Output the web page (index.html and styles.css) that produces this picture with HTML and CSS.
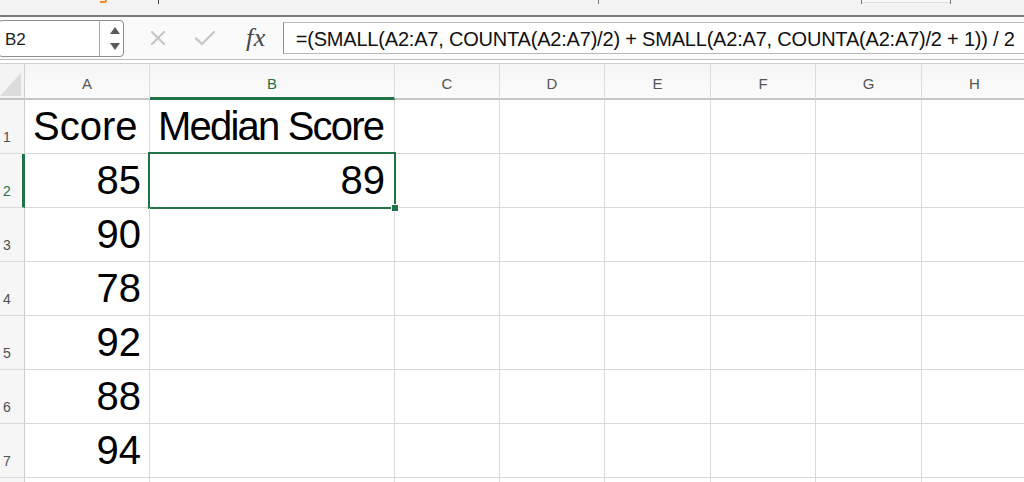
FILE: index.html
```html
<!DOCTYPE html>
<html>
<head>
<meta charset="utf-8">
<link rel="stylesheet" href="styles.css">
</head>
<body>
<div class="app">
  <div class="ribbon-edge">
    <span class="mark-orange"></span>
    <span class="tick tick-1"></span>
    <span class="tick tick-2"></span>
    <span class="tick tick-3"></span>
    <span class="ribbon-box"></span>
    <span class="tick"></span>
  </div>
  <div class="formula-bar">
    <div class="name-box">
      <span class="name-text">B2</span>
      <span class="name-spin"><i class="tri tri-up"></i><i class="tri tri-down"></i></span>
    </div>
    <svg class="ico-x" width="16" height="16" viewBox="0 0 16 16"><path d="M2 2 L14 14 M14 2 L2 14" stroke="#c6c6c6" stroke-width="2.2" fill="none" stroke-linecap="round"/></svg>
    <svg class="ico-check" width="22" height="16" viewBox="0 0 22 16"><path d="M2 8.5 L8 14 L20 2" stroke="#cacaca" stroke-width="2.4" fill="none" stroke-linecap="round" stroke-linejoin="round"/></svg>
    <span class="fx">fx</span>
    <div class="formula-input">=(SMALL(A2:A7, COUNTA(A2:A7)/2) + SMALL(A2:A7, COUNTA(A2:A7)/2 + 1)) / 2</div>
  </div>
  <div class="bar-sep"></div>
  <div class="sheet">
    <div class="corner"><svg class="corner-tri" width="21" height="23" viewBox="0 0 21 23"><path d="M21 0 L21 23 L0 23 Z" fill="#dcdcdc"/></svg></div>
    <div class="col-head">A</div>
    <div class="col-head col-sel">B</div>
    <div class="col-head">C</div>
    <div class="col-head">D</div>
    <div class="col-head">E</div>
    <div class="col-head">F</div>
    <div class="col-head">G</div>
    <div class="col-head">H</div>

    <div class="row-head">1</div>
    <div class="cell">Score</div>
    <div class="cell cell-title">Median Score</div>
    <div class="cell"></div><div class="cell"></div><div class="cell"></div><div class="cell"></div><div class="cell"></div><div class="cell"></div>

    <div class="row-head row-sel">2</div>
    <div class="cell num">85</div>
    <div class="cell num active">89<span class="fill-handle"></span></div>
    <div class="cell"></div><div class="cell"></div><div class="cell"></div><div class="cell"></div><div class="cell"></div><div class="cell"></div>

    <div class="row-head">3</div>
    <div class="cell num">90</div>
    <div class="cell"></div>
    <div class="cell"></div><div class="cell"></div><div class="cell"></div><div class="cell"></div><div class="cell"></div><div class="cell"></div>

    <div class="row-head">4</div>
    <div class="cell num">78</div>
    <div class="cell"></div>
    <div class="cell"></div><div class="cell"></div><div class="cell"></div><div class="cell"></div><div class="cell"></div><div class="cell"></div>

    <div class="row-head">5</div>
    <div class="cell num">92</div>
    <div class="cell"></div>
    <div class="cell"></div><div class="cell"></div><div class="cell"></div><div class="cell"></div><div class="cell"></div><div class="cell"></div>

    <div class="row-head">6</div>
    <div class="cell num">88</div>
    <div class="cell"></div>
    <div class="cell"></div><div class="cell"></div><div class="cell"></div><div class="cell"></div><div class="cell"></div><div class="cell"></div>

    <div class="row-head">7</div>
    <div class="cell num">94</div>
    <div class="cell"></div>
    <div class="cell"></div><div class="cell"></div><div class="cell"></div><div class="cell"></div><div class="cell"></div><div class="cell"></div>

    <div class="row-head"></div>
    <div class="cell"></div>
    <div class="cell"></div>
    <div class="cell"></div><div class="cell"></div><div class="cell"></div><div class="cell"></div><div class="cell"></div><div class="cell"></div>
  </div>
</div>
</body>
</html>
```

FILE: styles.css
```css
* { box-sizing: border-box; }
html, body { margin: 0; padding: 0; }
body {
  width: 1024px;
  height: 482px;
  overflow: hidden;
  background: #ffffff;
  font-family: "Liberation Sans", Arial, sans-serif;
  color: #000;
}
.app { width: 1024px; height: 482px; overflow: hidden; }

/* cut-off ribbon edge */
.ribbon-edge {
  height: 15px;
  background: #f3f3f3;
  display: flex;
  align-items: flex-start;
}
.mark-orange {
  width: 7px; height: 3px;
  margin-left: 100px;
  border-bottom: 2px solid #f08a24;
  border-right: 2px solid #f08a24;
  border-bottom-right-radius: 3px;
}
.tick { width: 1px; height: 4px; background: #777; }
.tick-1 { margin-left: 51px; background: #444; }
.tick-2 { margin-left: 439px; }
.tick-3 { margin-left: 262px; }
.ribbon-box {
  width: 88px; height: 3px;
  border-bottom: 1px solid #dedede;
  background: #f8f8f8;
}

/* formula bar */
.formula-bar {
  border-top: 2px solid #7b7b7b;
  background: #fafafa;
  display: flex;
  align-items: center;
  height: 44px;
}
.name-box {
  width: 126px;
  height: 37px;
  margin-left: -2px;
  border: 1px solid #8f8f8f;
  border-radius: 4px;
  background: #fff;
  display: flex;
  align-items: stretch;
}
.name-text {
  width: 101px;
  border-right: 1px solid #a8a8a8;
  font-size: 17px;
  line-height: 37px;
  padding-left: 6px;
  color: #1e1e1e;
}
.name-spin {
  flex: 1;
  display: flex;
  flex-direction: column;
  align-items: center;
  justify-content: center;
  gap: 9px;
  padding-left: 7px;
}
.tri { display: block; width: 0; height: 0; border-left: 5px solid transparent; border-right: 5px solid transparent; }
.tri-up { border-bottom: 7px solid #5a5a5a; }
.tri-down { border-top: 7px solid #5a5a5a; }
.ico-x { margin-left: 26px; }
.ico-check { margin-left: 28px; }
.fx {
  margin-left: 30px;
  font-family: "Liberation Serif", "Times New Roman", serif;
  font-style: italic;
  font-size: 26px;
  color: #474747;
  letter-spacing: 0.5px;
}
.formula-input {
  flex: 1;
  height: 32px;
  margin-left: 17px;
  background: #fff;
  border: 1px solid #b9b9b9;
  border-left: 1px solid #8c8c8c;
  border-right: none;
  font-size: 20px;
  letter-spacing: -0.2px;
  line-height: 30px;
  padding-left: 12px;
  padding-top: 1px;
  white-space: nowrap;
  overflow: hidden;
  color: #111;
}
.bar-sep {
  height: 5px;
  border-top: 1px solid #bdbdbd;
  border-bottom: 1px solid #cfcfcf;
  background: #fff;
}

/* sheet grid */
.sheet {
  display: grid;
  grid-template-columns: 25px 125px 245px 105px 105px 106px 105px 106px 106px;
  grid-template-rows: 36px repeat(7, 54px) 20px;
  width: 1032px;
}
.corner {
  background: #f4f4f4;
  border-right: 1px solid #cfcfcf;
  border-bottom: 2px solid #c4c4c4;
  display: flex;
  align-items: flex-end;
  padding-bottom: 2px;
}
.corner-tri { display: block; }
.col-head {
  background: linear-gradient(#f5f5f5, #fbfbfb);
  border-right: 1px solid #dcdcdc;
  border-bottom: 2px solid #c4c4c4;
  display: flex;
  align-items: flex-end;
  justify-content: center;
  font-size: 15px;
  line-height: 15px;
  padding-bottom: 7px;
  color: #555;
}
.col-sel {
  color: #217346;
  border-bottom: 3px solid #217346;
  padding-bottom: 6px;
}
.row-head {
  background: #f6f6f6;
  border-right: 1px solid #cdcdcd;
  border-bottom: 1px solid #dadada;
  display: flex;
  align-items: flex-end;
  font-size: 14px;
  line-height: 14px;
  padding-left: 3px;
  padding-bottom: 9px;
  color: #505050;
}
.row-sel {
  color: #217346;
  border-right: 3px solid #217346;
}
.cell {
  position: relative;
  border-right: 1px solid #d9d9d9;
  border-bottom: 1px solid #d9d9d9;
  display: flex;
  align-items: flex-end;
  font-size: 40px;
  line-height: 40px;
  padding: 0 8px 7px 8px;
  white-space: nowrap;
}
.cell-title { letter-spacing: -1.8px; }
.num { justify-content: flex-end; padding-right: 8px; }
.active { padding-right: 9px; }
.active::after {
  content: "";
  position: absolute;
  left: -2px; top: -2px; right: -2px; bottom: -2px;
  border: 2px solid #217346;
}
.fill-handle {
  position: absolute;
  right: -5px;
  bottom: -5px;
  width: 8px;
  height: 8px;
  background: #217346;
  border: 1px solid #fff;
  z-index: 2;
}
```
